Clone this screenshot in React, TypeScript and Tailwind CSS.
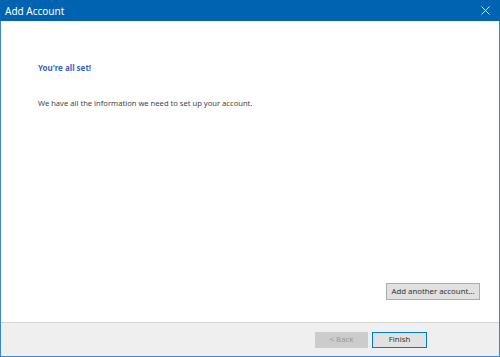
import React from 'react'

export default function App() {
  return (
    <div className="w-[500px] h-[357px] flex flex-col bg-white border-x border-b border-[#3b87cf] text-[#444]" style={{ fontFamily: '"Segoe UI", "Noto Sans", sans-serif' }}>
      {/* Title bar */}
      <div className="h-[21px] shrink-0 bg-[#0063b1] flex items-center justify-between pl-[5px] pr-[10px] -mx-px">
        <span className="text-white text-[10px] leading-none">Add Account</span>
        <svg width="9" height="9" viewBox="0 0 9 9" className="text-[#d6e4f2]">
          <path d="M0.5 0.5 L8.5 8.5 M8.5 0.5 L0.5 8.5" stroke="currentColor" strokeWidth="1" />
        </svg>
      </div>

      {/* Content */}
      <div className="flex-1 flex flex-col pl-[37px] pr-[19px]">
        <h1 className="mt-[43px] text-[8px] font-bold text-[#3a5fcd] leading-none">You're all set!</h1>
        <p className="mt-[28px] text-[7.6px] leading-none">We have all the information we need to set up your account.</p>
        <div className="mt-auto mb-[22px] flex justify-end">
          <button className="h-[17px] w-[94px] bg-[#e1e1e1] border border-[#adadad] text-[7.8px] text-[#333]">Add another account...</button>
        </div>
      </div>

      {/* Footer */}
      <div className="h-[34px] shrink-0 bg-[#efefef] border-t border-[#d5d5d5] flex items-center justify-end gap-[4px] pr-[72px]">
        <button disabled className="h-[16px] w-[53px] bg-[#cccccc] text-[7.8px] text-[#9a9a9a]">&lt; Back</button>
        <button className="h-[16px] w-[55px] bg-[#e1e1e1] border border-[#0078d7] text-[7.8px] text-[#333]">Finish</button>
      </div>
    </div>
  )
}
